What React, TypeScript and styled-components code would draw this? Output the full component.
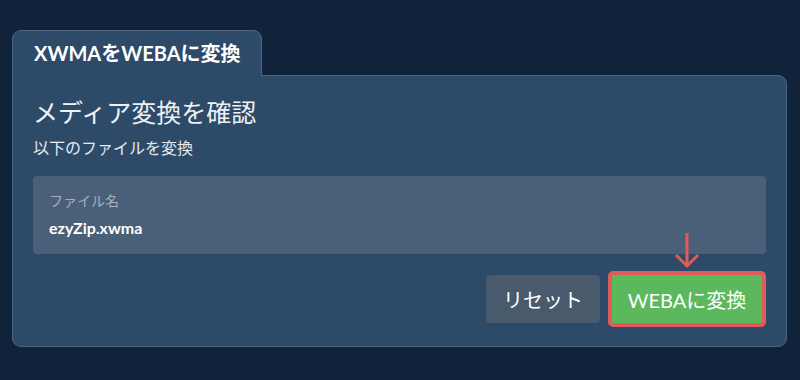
import styled, { createGlobalStyle } from "styled-components";

const GlobalStyle = createGlobalStyle`
  html, body {
    margin: 0;
    padding: 0;
    background: #10233a;
  }
  body {
    font-family: Lato, "Noto Sans CJK JP", sans-serif;
    color: #ffffff;
  }
`

const Page = styled.div`
  width: 800px;
  height: 380px;
  box-sizing: border-box;
  padding: 30px 13px 0 12px;
`

const Tab = styled.div`
  position: relative;
  z-index: 1;
  display: inline-flex;
  align-items: center;
  box-sizing: border-box;
  height: 46px;
  padding: 0 20px 2px 21px;
  margin-bottom: -1px;
  background: #2d4a69;
  border: 1px solid #4c6687;
  border-bottom: none;
  border-radius: 9px 9px 0 0;
  font-size: 20px;
  font-weight: 700;
`

const Panel = styled.div`
  background: #2d4a69;
  border: 1px solid #4c6687;
  border-radius: 0 9px 9px 9px;
  padding: 19px 20px 19px 20px;
`

const Title = styled.h2`
  margin: 0;
  font-size: 25px;
  font-weight: 400;
  line-height: 34px;
  color: #eef1f5;
`

const Subtitle = styled.p`
  margin: 8px 0 0;
  font-size: 16px;
  line-height: 22px;
  color: #e6eaf0;
`

const Field = styled.div`
  margin-top: 17px;
  height: 78px;
  box-sizing: border-box;
  padding: 16px 16px 0;
  background: #4a6078;
  border-radius: 4px;
`

const FieldLabel = styled.div`
  font-size: 14px;
  line-height: 18px;
  color: #a5b0be;
`

const FieldValue = styled.div`
  margin-top: 8px;
  font-size: 16px;
  font-weight: 700;
  line-height: 20px;
  color: #ffffff;
`

const Actions = styled.div`
  display: flex;
  justify-content: flex-end;
  align-items: center;
  gap: 8px;
  margin-top: 17px;
`

const ResetButton = styled.button`
  height: 48px;
  width: 114px;
  border: none;
  border-radius: 4px;
  background: #4a5a6d;
  color: #ffffff;
  font-family: Lato, "Noto Sans CJK JP", sans-serif;
  font-size: 20px;
  cursor: pointer;
`

const ConvertWrap = styled.div`
  position: relative;
`

const ConvertButton = styled.button`
  height: 56px;
  width: 158px;
  box-sizing: border-box;
  border: 4px solid #e05c5a;
  border-radius: 5px;
  background: #5cb85c;
  color: #ffffff;
  font-family: Lato, "Noto Sans CJK JP", sans-serif;
  font-size: 20px;
  cursor: pointer;
`

const Arrow = styled.svg`
  position: absolute;
  left: 65px;
  top: -39px;
`

export default function App() {
  return (
    <>
      <GlobalStyle />
      <Page>
        <Tab>XWMAをWEBAに変換</Tab>
        <Panel>
          <Title>メディア変換を確認</Title>
          <Subtitle>以下のファイルを変換</Subtitle>
          <Field>
            <FieldLabel>ファイル名</FieldLabel>
            <FieldValue>ezyZip.xwma</FieldValue>
          </Field>
          <Actions>
            <ResetButton>リセット</ResetButton>
            <ConvertWrap>
              <Arrow width="28" height="38" viewBox="0 0 28 38">
                <path
                  d="M14 1 V34 M3 23 L14 34 L25 23"
                  stroke="#e05c5a"
                  strokeWidth="3"
                  fill="none"
                />
              </Arrow>
              <ConvertButton>WEBAに変換</ConvertButton>
            </ConvertWrap>
          </Actions>
        </Panel>
      </Page>
    </>
  );
}
